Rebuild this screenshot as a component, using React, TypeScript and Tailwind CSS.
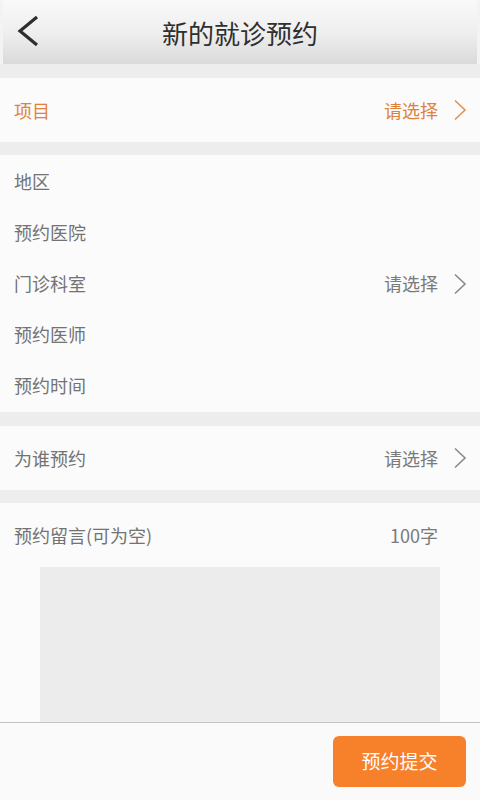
import React from 'react';

const font = { fontFamily: '"Noto Sans CJK SC", "Liberation Sans", sans-serif' };

const Chevron: React.FC<{ color: string }> = ({ color }) => (
  <svg width="14" height="22" viewBox="0 0 14 22" fill="none" className="ml-[15px]">
    <path d="M2 1.5 L12 11 L2 20.5" stroke={color} strokeWidth="1.6" strokeLinejoin="miter" />
  </svg>
);

const Row: React.FC<{ label: string; value?: string; h: string; accent?: boolean }> = ({
  label,
  value,
  h,
  accent,
}) => (
  <div className={`flex items-center justify-between pl-[14px] pr-[13px] ${h}`}>
    <span className={`text-[18px] ${accent ? 'text-[#e0823a]' : 'text-[#737373]'}`}>{label}</span>
    {value && (
      <div className="flex items-center">
        <span className={`text-[18px] ${accent ? 'text-[#e0823a]' : 'text-[#7a7a7a]'}`}>{value}</span>
        <Chevron color={accent ? '#e39152' : '#8a8a8a'} />
      </div>
    )}
  </div>
);

const App: React.FC = () => {
  return (
    <div className="flex h-[800px] w-[480px] flex-col overflow-hidden bg-[#ededed]" style={font}>
      <header className="bg-[#f3f3f3] px-[3px]">
        <div className="relative flex h-[64px] items-center justify-center bg-gradient-to-b from-[#f9f9f9] via-[#efefef] to-[#dadada]">
          <svg
            width="26"
            height="34"
            viewBox="0 0 26 34"
            fill="none"
            className="absolute left-[12px] top-[14px]"
          >
            <path d="M22 3 L5 17 L22 31" stroke="#2e2e2e" strokeWidth="3.2" />
          </svg>
          <h1 className="text-[26px] text-[#2f2f2f]">新的就诊预约</h1>
        </div>
      </header>

      <main className="flex-1 overflow-hidden">
        <div className="mt-[14px] bg-[#fbfbfb]">
          <Row label="项目" value="请选择" h="h-[64px]" accent />
        </div>

        <div className="mt-[13px] bg-[#fbfbfb] py-[1px]">
          <Row label="地区" h="h-[51px]" />
          <Row label="预约医院" h="h-[51px]" />
          <Row label="门诊科室" value="请选择" h="h-[51px]" />
          <Row label="预约医师" h="h-[51px]" />
          <Row label="预约时间" h="h-[51px]" />
        </div>

        <div className="mt-[14px] bg-[#fbfbfb]">
          <Row label="为谁预约" value="请选择" h="h-[64px]" />
        </div>

        <div className="mt-[13px] h-[300px] bg-[#fbfbfb]">
          <div className="flex h-[64px] items-center justify-between pl-[14px] pr-[42px]">
            <span className="text-[18px] text-[#737373]">预约留言(可为空)</span>
            <span className="text-[18px] text-[#7a7a7a]">100字</span>
          </div>
          <div className="mx-[40px] h-[170px] bg-[#ececec]" />
        </div>
      </main>

      <footer className="flex h-[78px] items-center justify-end border-t border-[#c4c4c4] bg-[#fafafa] pr-[14px]">
        <button className="h-[51px] w-[133px] rounded-[6px] bg-[#f7802b] text-[19px] text-white">
          预约提交
        </button>
      </footer>
    </div>
  );
};

export default App;
